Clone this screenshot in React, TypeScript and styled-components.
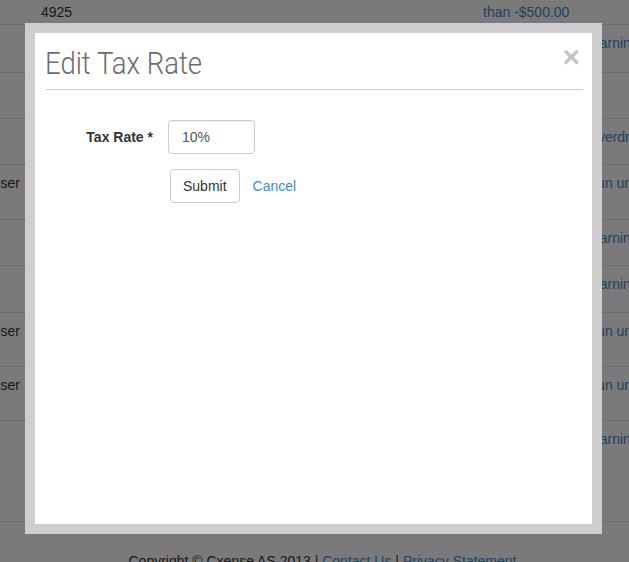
import React from 'react';
import styled, { createGlobalStyle } from 'styled-components';

const GlobalStyle = createGlobalStyle`
  html, body {
    margin: 0;
    padding: 0;
    background: #ffffff;
    overflow: hidden;
  }
  body {
    font-family: "Liberation Sans", Arial, sans-serif;
    font-size: 14px;
    color: #333;
  }
`;

const Page = styled.div`
  width: 629px;
  height: 562px;
  overflow: hidden;
  position: relative;
`;

const Table = styled.div`
  margin-left: -43px;
  margin-top: -26px;
  width: 760px;
`;

const Row = styled.div<{ $h: number }>`
  display: grid;
  grid-template-columns: 84px 442px 104px 1fr;
  height: ${(p) => p.$h}px;
  border-bottom: 1px solid #dddddd;
  box-sizing: border-box;
`;

const Cell = styled.div<{ $link?: boolean }>`
  padding: 8px 0 0 0;
  line-height: 20px;
  color: ${(p) => (p.$link ? '#428bca' : '#333')};
  white-space: nowrap;
  overflow: hidden;
`;

const Footer = styled.div`
  padding: 29px 0 0 16px;
  text-align: center;
  line-height: 20px;
  color: #333;

  a {
    color: #428bca;
    text-decoration: underline;
  }
`;

const Overlay = styled.div`
  position: absolute;
  inset: 0;
  background: rgba(0, 0, 0, 0.52);
  padding: 23px 27px 28px 25px;
  box-sizing: border-box;
  display: flex;
`;

const Frame = styled.div`
  flex: 1;
  background: #cecece;
  padding: 10px;
  display: flex;
`;

const Dialog = styled.div`
  flex: 1;
  background: #ffffff;
  padding: 0 9px 0 11px;
  position: relative;
`;

const Header = styled.div`
  height: 56px;
  border-bottom: 1px solid #cccccc;
  display: flex;
  align-items: flex-end;
`;

const Title = styled.h3`
  margin: 0 0 8px -1px;
  font-family: Roboto, "Liberation Sans", sans-serif;
  font-weight: 300;
  font-size: 32px;
  line-height: 36px;
  color: #6c6c6c;
  transform: scaleX(0.86);
  transform-origin: left center;
  white-space: nowrap;
`;

const Close = styled.button`
  position: absolute;
  top: 9px;
  right: 12px;
  border: none;
  background: none;
  padding: 0;
  font-family: "Liberation Sans", Arial, sans-serif;
  font-weight: bold;
  font-size: 30px;
  line-height: 30px;
  color: #c4c4c4;
  cursor: pointer;
`;

const Form = styled.form`
  padding-top: 30px;
  display: flex;
  flex-direction: column;
  gap: 15px;
`;

const Field = styled.div`
  display: flex;
  align-items: center;
`;

const Label = styled.label`
  width: 107px;
  text-align: right;
  font-weight: bold;
  color: #333;
  margin-right: 15px;
`;

const Input = styled.input`
  width: 87px;
  height: 34px;
  box-sizing: border-box;
  border: 1px solid #cccccc;
  border-radius: 4px;
  padding: 0 13px;
  font-family: "Liberation Sans", Arial, sans-serif;
  font-size: 14px;
  color: #555;
  box-shadow: inset 0 1px 1px rgba(0, 0, 0, 0.075);
  outline: none;
`;

const Actions = styled.div`
  display: flex;
  align-items: center;
  margin-left: 124px;
  gap: 13px;
`;

const SubmitButton = styled.button`
  height: 34px;
  padding: 0 12px;
  border: 1px solid #cccccc;
  border-radius: 4px;
  background: #ffffff;
  font-family: "Liberation Sans", Arial, sans-serif;
  font-size: 14px;
  color: #333;
  cursor: pointer;
`;

const CancelLink = styled.a`
  color: #428bca;
  text-decoration: none;
  cursor: pointer;
`;

const rows: { h: number; a?: string; b?: string; c?: string; d?: string }[] = [
  { h: 51, b: 'Campaign budget\n4925', c: 'Balance less\nthan -$500.00', d: 'Warning' },
  { h: 48, d: 'Warning when' },
  { h: 46 },
  { h: 46, d: 'Overdraft' },
  { h: 55, a: 'Advertiser', d: 'Run until' },
  { h: 46, d: 'Warning when' },
  { h: 47, d: 'Warning when' },
  { h: 54, a: 'Advertiser', d: 'Run until' },
  { h: 54, a: 'Advertiser', d: 'Run until' },
  { h: 101, d: 'Warning when' },
];

const renderLines = (text?: string) =>
  text?.split('\n').map((line, i) => <div key={i}>{line}</div>);

const App: React.FC = () => {
  return (
    <Page>
      <GlobalStyle />
      <Table>
        {rows.map((r, i) => (
          <Row key={i} $h={r.h}>
            <Cell>{r.a}</Cell>
            <Cell>{renderLines(r.b)}</Cell>
            <Cell $link>{renderLines(r.c)}</Cell>
            <Cell $link>{r.d}</Cell>
          </Row>
        ))}
      </Table>
      <Footer>
        Copyright © Cxense AS 2013 | <a href="#">Contact Us</a> | <a href="#">Privacy Statement</a>
      </Footer>
      <Overlay>
        <Frame>
          <Dialog>
            <Close type="button">×</Close>
            <Header>
              <Title>Edit Tax Rate</Title>
            </Header>
            <Form onSubmit={(e) => e.preventDefault()}>
              <Field>
                <Label htmlFor="taxRate">Tax Rate *</Label>
                <Input id="taxRate" type="text" defaultValue="10%" />
              </Field>
              <Actions>
                <SubmitButton type="submit">Submit</SubmitButton>
                <CancelLink>Cancel</CancelLink>
              </Actions>
            </Form>
          </Dialog>
        </Frame>
      </Overlay>
    </Page>
  );
};

export default App;
